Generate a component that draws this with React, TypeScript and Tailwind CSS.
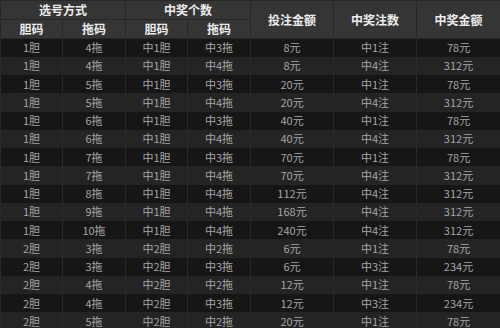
const rows: string[][] = [
  ["1胆", "4拖", "中1胆", "中3拖", "8元", "中1注", "78元"],
  ["1胆", "4拖", "中1胆", "中4拖", "8元", "中4注", "312元"],
  ["1胆", "5拖", "中1胆", "中3拖", "20元", "中1注", "78元"],
  ["1胆", "5拖", "中1胆", "中4拖", "20元", "中4注", "312元"],
  ["1胆", "6拖", "中1胆", "中3拖", "40元", "中1注", "78元"],
  ["1胆", "6拖", "中1胆", "中4拖", "40元", "中4注", "312元"],
  ["1胆", "7拖", "中1胆", "中3拖", "70元", "中1注", "78元"],
  ["1胆", "7拖", "中1胆", "中4拖", "70元", "中4注", "312元"],
  ["1胆", "8拖", "中1胆", "中4拖", "112元", "中4注", "312元"],
  ["1胆", "9拖", "中1胆", "中4拖", "168元", "中4注", "312元"],
  ["1胆", "10拖", "中1胆", "中4拖", "240元", "中4注", "312元"],
  ["2胆", "3拖", "中2胆", "中2拖", "6元", "中1注", "78元"],
  ["2胆", "3拖", "中2胆", "中3拖", "6元", "中3注", "234元"],
  ["2胆", "4拖", "中2胆", "中2拖", "12元", "中1注", "78元"],
  ["2胆", "4拖", "中2胆", "中3拖", "12元", "中3注", "234元"],
  ["2胆", "5拖", "中2胆", "中2拖", "20元", "中1注", "78元"],
];

const widths = [62, 63, 62, 63, 83, 83, 84];

export default function App() {
  const th = "border border-[#282828] bg-[#353535] text-[#ececec] font-bold text-[12px] p-0 text-center";
  return (
    <div
      className="w-[500px] h-[328px] overflow-hidden bg-[#161616]"
      style={{ fontFamily: '"Noto Sans CJK SC", "Liberation Sans", sans-serif' }}
    >
      <table className="w-[500px] table-fixed border-collapse">
        <colgroup>
          {widths.map((w, i) => (
            <col key={i} style={{ width: w }} />
          ))}
        </colgroup>
        <thead>
          <tr className="h-[18px]">
            <th colSpan={2} className={th}>选号方式</th>
            <th colSpan={2} className={th}>中奖个数</th>
            <th rowSpan={2} className={th}>投注金额</th>
            <th rowSpan={2} className={th}>中奖注数</th>
            <th rowSpan={2} className={th}>中奖金额</th>
          </tr>
          <tr className="h-[18px]">
            <th className={th}>胆码</th>
            <th className={th}>拖码</th>
            <th className={th}>胆码</th>
            <th className={th}>拖码</th>
          </tr>
        </thead>
        <tbody>
          {rows.map((r, i) => (
            <tr
              key={i}
              className={`h-[18.25px] ${i % 2 === 0 ? "bg-[#161616]" : "bg-[#242424]"}`}
            >
              {r.map((c, j) => (
                <td
                  key={j}
                  className="border-x border-[#2a2a2a] p-0 text-center text-[11px] leading-none text-[#a6a6a6]"
                >
                  {c}
                </td>
              ))}
            </tr>
          ))}
        </tbody>
      </table>
    </div>
  );
}
